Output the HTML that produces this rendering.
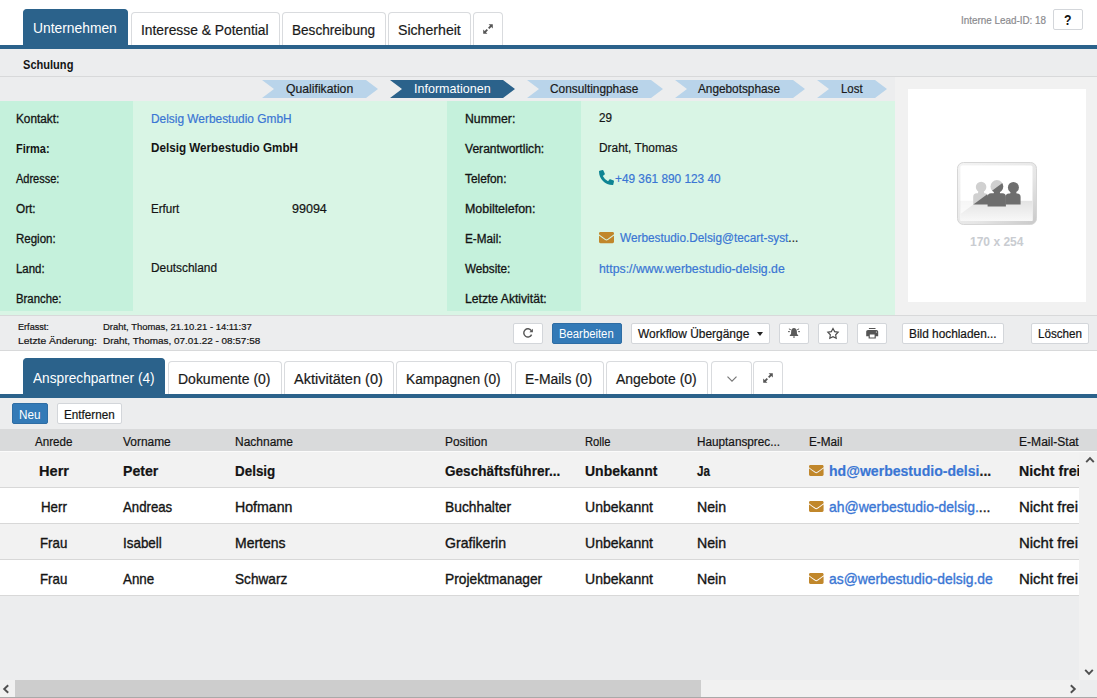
<!DOCTYPE html>
<html lang="de">
<head>
<meta charset="utf-8">
<title>Lead – Schulung</title>
<style>
*{box-sizing:border-box;margin:0;padding:0}
html,body{width:1097px;height:698px;overflow:hidden;background:#ecedee;font-family:"Liberation Sans",sans-serif;color:#141414}
.abs{position:absolute}
.t{position:absolute;white-space:nowrap;line-height:1;transform-origin:0 0;-webkit-text-stroke:0.2px}
#top{position:absolute;left:0;top:0;width:1097px;height:45px;background:#fff}
.line{position:absolute;left:0;width:1097px;height:4px;background:#2b628b}
.tab{position:absolute;background:#fff;border:1px solid #d9dbde;border-bottom:none;border-radius:4px 4px 0 0}
.tab.act{background:#2b628b;border-color:#2b628b}
#grey1{position:absolute;left:0;top:49px;width:1097px;height:27px;background:#ecedee}
.hl{position:absolute;left:0;height:1px;background:#d8d9da}
.chev{position:absolute;top:80px;height:18px;background:#b9d4ea;
 clip-path:polygon(0 0,calc(100% - 12px) 0,100% 50%,calc(100% - 12px) 100%,0 100%,12px 50%)}
.chev.on{background:#2b628b}
#green{position:absolute;left:0;top:101px;width:895px;height:214px;background:#d9f5e5}
.lab{position:absolute;top:0;height:210px;background:#c5f1dc}
.lk{color:#3a76d4}
.dk{color:#222}
#right{position:absolute;left:895px;top:77px;width:202px;height:238px;background:#f1f1f1}
#imgbox{position:absolute;left:908px;top:89px;width:178px;height:213px;background:#fff}
#foot{position:absolute;left:0;top:316px;width:1097px;height:34px;background:#ecedee}
.btn{position:absolute;top:323px;height:21px;background:#fff;border:1px solid #d3d6da;border-radius:2px}
.btn.pri{background:#337ab7;border-color:#2e6da4}
#tabs2{position:absolute;left:0;top:351px;width:1097px;height:43px;background:#fff}
#tool{position:absolute;left:0;top:398px;width:1097px;height:31px;background:#ecedee}
#thead{position:absolute;left:0;top:429px;width:1097px;height:22px;background:#d9dadb}
.row{position:absolute;left:0;width:1079px;height:36px;border-bottom:1px solid #d8d8d8}
.row.g{background:#f2f2f2}
.row.w{background:#fff}
svg{position:absolute;overflow:visible}
</style>
</head>
<body>
<div id="top"></div>
<div class="line" style="top:45px"></div>
<div class="tab act" style="left:23px;top:9px;width:105px;height:36px"></div>
<div class="t m " style="left:33.1px;top:21.45px;font-size:14px;color:#fff;-webkit-text-stroke:0;transform:scaleX(0.9879)">Unternehmen</div>
<div class="tab " style="left:131px;top:12px;width:149px;height:33px"></div>
<div class="t m " style="left:141.1px;top:22.65px;font-size:14px;color:#1a1a1a;transform:scaleX(0.9877)">Interesse &amp; Potential</div>
<div class="tab " style="left:282px;top:12px;width:104px;height:33px"></div>
<div class="t m " style="left:291.8px;top:22.65px;font-size:14px;color:#1a1a1a;transform:scaleX(0.9705)">Beschreibung</div>
<div class="tab " style="left:388px;top:12px;width:83px;height:33px"></div>
<div class="t m " style="left:397.5px;top:22.65px;font-size:14px;color:#1a1a1a;transform:scaleX(1.0086)">Sicherheit</div>
<div class="tab " style="left:473px;top:12px;width:30px;height:33px"></div>
<svg style="left:483px;top:24px" width="10" height="10" viewBox="0 0 10 10"><g stroke="#555" stroke-width="1.900"><line x1="5.700" y1="4.300" x2="8.300" y2="1.700"/><line x1="1.700" y1="8.300" x2="4.300" y2="5.700"/></g><path fill="#555" d="M5.600 0.200H9.800V4.400ZM0.200 5.600V9.800H4.400Z"/></svg>
<div class="t m " style="left:960.97px;top:14.63px;font-size:10.6px;color:#8a8a8e;transform:scaleX(0.9321)">Interne Lead-ID: 18</div>
<div class="abs" style="left:1053px;top:9px;width:30px;height:21px;border:1px solid #d3d6da;border-radius:2px;background:#fff"></div>
<div class="t m " style="left:1063.8px;top:12.75px;font-size:14px;font-weight:bold;-webkit-text-stroke:0;transform:scaleX(0.8759)">?</div>
<div id="grey1"></div>
<div class="t m " style="left:23.48px;top:59.02px;font-size:12.5px;font-weight:bold;-webkit-text-stroke:0;transform:scaleX(0.8849)">Schulung</div>
<div class="hl" style="top:76px;width:1097px"></div>
<div class="chev " style="left:262px;width:116px"></div>
<div class="t m " style="left:285.68px;top:83.4px;font-size:12.4px;color:#1a1a1a;transform:scaleX(0.9855)">Qualifikation</div>
<div class="chev on" style="left:390px;width:125px"></div>
<div class="t m " style="left:413.98px;top:83.4px;font-size:12.4px;color:#fff;-webkit-text-stroke:0;transform:scaleX(1.0110)">Informationen</div>
<div class="chev " style="left:527px;width:136px"></div>
<div class="t m " style="left:550.38px;top:83.4px;font-size:12.4px;color:#1a1a1a;transform:scaleX(0.9565)">Consultingphase</div>
<div class="chev " style="left:675px;width:130px"></div>
<div class="t m " style="left:698.38px;top:83.4px;font-size:12.4px;color:#1a1a1a;transform:scaleX(0.9521)">Angebotsphase</div>
<div class="chev " style="left:817px;width:70px"></div>
<div class="t m " style="left:840.88px;top:83.4px;font-size:12.4px;color:#1a1a1a;transform:scaleX(0.9222)">Lost</div>
<div id="green"><div class="lab" style="left:0;width:133px"></div><div class="lab" style="left:447px;width:134px"></div></div>
<div class="t m " style="left:15.9px;top:112.84px;font-size:12px;-webkit-text-stroke:0.3px;transform:scaleX(0.9834)">Kontakt:</div>
<div class="t m " style="left:15.9px;top:142.84px;font-size:12px;font-weight:bold;-webkit-text-stroke:0;transform:scaleX(0.9158)">Firma:</div>
<div class="t m " style="left:15.9px;top:172.84px;font-size:12px;-webkit-text-stroke:0.3px;transform:scaleX(0.9164)">Adresse:</div>
<div class="t m " style="left:15.9px;top:202.84px;font-size:12px;-webkit-text-stroke:0.3px;transform:scaleX(0.9800)">Ort:</div>
<div class="t m " style="left:15.9px;top:232.84px;font-size:12px;-webkit-text-stroke:0.3px;transform:scaleX(0.9595)">Region:</div>
<div class="t m " style="left:15.9px;top:262.84px;font-size:12px;-webkit-text-stroke:0.3px;transform:scaleX(0.9523)">Land:</div>
<div class="t m " style="left:15.9px;top:292.84px;font-size:12px;-webkit-text-stroke:0.3px;transform:scaleX(0.9452)">Branche:</div>
<div class="t m " style="left:464.9px;top:112.84px;font-size:12px;-webkit-text-stroke:0.3px;transform:scaleX(1.0194)">Nummer:</div>
<div class="t m " style="left:464.9px;top:142.84px;font-size:12px;-webkit-text-stroke:0.3px;transform:scaleX(1.0063)">Verantwortlich:</div>
<div class="t m " style="left:464.9px;top:172.84px;font-size:12px;-webkit-text-stroke:0.3px;transform:scaleX(0.9874)">Telefon:</div>
<div class="t m " style="left:464.9px;top:202.84px;font-size:12px;-webkit-text-stroke:0.3px;transform:scaleX(1.0346)">Mobiltelefon:</div>
<div class="t m " style="left:464.9px;top:232.84px;font-size:12px;-webkit-text-stroke:0.3px;transform:scaleX(0.9774)">E-Mail:</div>
<div class="t m " style="left:464.9px;top:262.84px;font-size:12px;-webkit-text-stroke:0.3px;transform:scaleX(0.9748)">Website:</div>
<div class="t m " style="left:464.9px;top:292.84px;font-size:12px;-webkit-text-stroke:0.3px;transform:scaleX(1.0122)">Letzte Aktivität:</div>
<div class="t m " style="left:150.8px;top:112.84px;font-size:12px;color:#3a76d4;transform:scaleX(0.9912)">Delsig Werbestudio GmbH</div>
<div class="t m " style="left:150.8px;top:141.84px;font-size:12px;font-weight:bold;-webkit-text-stroke:0;transform:scaleX(0.9726)">Delsig Werbestudio GmbH</div>
<div class="t m " style="left:150.8px;top:202.84px;font-size:12px;transform:scaleX(0.9644)">Erfurt</div>
<div class="t m " style="left:291.6px;top:202.84px;font-size:12px;transform:scaleX(1.0427)">99094</div>
<div class="t m " style="left:150.8px;top:261.64px;font-size:12px;transform:scaleX(0.9892)">Deutschland</div>
<div class="t m " style="left:599.4px;top:111.84px;font-size:12px;transform:scaleX(0.9731)">29</div>
<div class="t m " style="left:598.6px;top:141.54px;font-size:12px;transform:scaleX(0.9904)">Draht, Thomas</div>
<svg style="left:599px;top:170px" width="15" height="15" viewBox="0 0 512 512"><path fill="#0e8493" d="M497.39 361.8l-112-48a24 24 0 0 0-28 6.9l-49.600 60.600A370.660 370.660 0 0 1 130.600 204.110l60.600-49.600a23.940 23.940 0 0 0 6.900-28l-48-112A24.160 24.160 0 0 0 122.600.610l-104 24A24 24 0 0 0 0 48c0 256.500 207.900 464 464 464a24 24 0 0 0 23.400-18.600l24-104a24.290 24.290 0 0 0-14.010-27.600z"/></svg>
<div class="t m " style="left:614.7px;top:173.04px;font-size:12px;color:#3a76d4;transform:scaleX(0.9859)">+49 361 890 123 40</div>
<svg style="left:599px;top:232px" width="15" height="11.25" viewBox="0 64 512 384"><path fill="#c1872b" d="M502.300 190.800c3.900-3.100 9.700-.2 9.700 4.700V400c0 26.500-21.500 48-48 48H48c-26.500 0-48-21.500-48-48V195.600c0-5 5.700-7.800 9.700-4.700 22.400 17.400 52.100 39.500 154.100 113.600 21.100 15.400 56.700 47.800 92.200 47.600 35.700.3 72-32.800 92.300-47.600 102-74.100 131.600-96.300 154-113.700zM256 320c23.200.4 56.600-29.200 73.400-41.400 132.700-96.300 142.800-104.700 173.400-128.700 5.800-4.500 9.200-11.500 9.200-18.900V112c0-26.500-21.500-48-48-48H48C21.500 64 0 85.500 0 112v19c0 7.400 3.400 14.300 9.200 18.900 30.600 23.900 40.700 32.400 173.400 128.700 16.800 12.200 50.200 41.800 73.400 41.400z"/></svg>
<div class="t m " style="left:619.7px;top:232.34px;font-size:12px;color:#3a76d4;transform:scaleX(0.9825)">Werbestudio.Delsig@tecart-syst<span class="dk">...</span></div>
<div class="t m " style="left:598.8px;top:263.14px;font-size:12px;color:#3a76d4;transform:scaleX(1.0240)">https://www.werbestudio-delsig.de</div>
<div id="right"></div><div id="imgbox"></div>
<svg style="left:957px;top:162px" width="80" height="63" viewBox="0 0 80 63"><defs><linearGradient id="gf" x1="0" y1="0" x2="0" y2="1"><stop offset="0" stop-color="#e3e3e3"/><stop offset="1" stop-color="#f8f8f8"/></linearGradient><linearGradient id="gb" x1="0" y1="0" x2="1" y2="1"><stop offset="0" stop-color="#f4f4f4"/><stop offset="0.6" stop-color="#e6e6e6"/><stop offset="1" stop-color="#c9c9c9"/></linearGradient><clipPath id="gc"><rect x="3.500" y="3.500" width="72" height="55.500" rx="1.500"/></clipPath></defs><rect x="0.500" y="0.500" width="79" height="62" rx="6" fill="url(#gb)" stroke="#d6d6d6" stroke-width="1"/><rect x="3.500" y="3.500" width="72" height="55.500" rx="1.500" fill="#fff"/><rect x="3.500" y="38.800" width="72" height="20.200" fill="url(#gf)"/><g fill="#6e6e6e"><circle cx="24.100" cy="25" r="5.300"/><path d="M16.2 42.6V34.7Q16.2 31.2 19.7 31.2L20.900000000000002 31.2L21.5 28.7H26.700000000000003L27.3 31.2H27.5Q31 31.2 31 34.7V42.6Z"/><circle cx="56.400" cy="25.400" r="5.500"/><path d="M48.5 42.6V35.0Q48.5 31.5 52.0 31.5L53.199999999999996 31.5L53.8 29.0H59.0L59.6 31.5H60.1Q63.6 31.5 63.6 35.0V42.6Z"/><circle cx="39.900" cy="24.500" r="6.400"/><path d="M30.6 44.5V34.7Q30.6 31.2 34.1 31.2L36.699999999999996 31.2L37.3 28.7H42.5L43.1 31.2H45.4Q48.9 31.2 48.9 34.7V44.5Z"/></g><path clip-path="url(#gc)" d="M3.500 3.500H69.200L3.500 52.100Z" fill="#fff" fill-opacity="0.68"/></svg>
<div class="t m " style="left:970.4px;top:235.54px;font-size:12px;color:#c9ccd1;font-weight:bold;-webkit-text-stroke:0;transform:scaleX(1.0020)">170 x 254</div>
<div class="hl" style="top:315px;width:1097px"></div>
<div id="foot"></div>
<div class="t m " style="left:17.82px;top:321.59px;font-size:9.7px;transform:scaleX(0.9408)">Erfasst:</div>
<div class="t m " style="left:17.82px;top:335.79px;font-size:9.7px;transform:scaleX(1.0678)">Letzte Änderung:</div>
<div class="t m " style="left:102.92px;top:321.59px;font-size:9.7px;transform:scaleX(0.9745)">Draht, Thomas, 21.10.21 - 14:11:37</div>
<div class="t m " style="left:102.92px;top:335.79px;font-size:9.7px;transform:scaleX(1.0254)">Draht, Thomas, 07.01.22 - 08:57:58</div>
<div class="btn " style="left:513px;width:30px"></div>
<div class="btn pri" style="left:552px;width:70px"></div>
<div class="btn " style="left:631px;width:139px"></div>
<div class="btn " style="left:779px;width:30px"></div>
<div class="btn " style="left:818px;width:30px"></div>
<div class="btn " style="left:857px;width:30px"></div>
<div class="btn " style="left:902px;width:102px"></div>
<div class="btn " style="left:1031px;width:58px"></div>
<svg style="left:523px;top:328px" width="10" height="10" viewBox="0 0 10 10"><path fill="none" stroke="#555" stroke-width="1.4" d="M8.6 6.6A4.1 4.1 0 1 1 8.3 2.6"/><path fill="#555" d="M9.9 0.8V4.3H6.4Z"/></svg>
<svg style="left:782px;top:322px" width="24" height="24" viewBox="0 0 24 24"><path fill="#5a5a5a" d="M12 6.100C10.300 6.100 9.300 7.500 9.200 9L9 12.100L7.800 13.300V14H16.200V13.300L15 12.100L14.800 9C14.700 7.500 13.700 6.100 12 6.100ZM10.900 14.600H13.100A1.100 1.200 0 0 1 10.900 14.600Z"/><g stroke="#5a5a5a" stroke-width="1"><line x1="6.900" y1="6.900" x2="8.800" y2="7.700"/><line x1="6" y1="9.650" x2="7.900" y2="9.650"/><line x1="15.200" y1="7.700" x2="17.100" y2="6.900"/><line x1="16.100" y1="9.650" x2="18" y2="9.650"/></g></svg>
<svg style="left:821px;top:322px" width="24" height="24" viewBox="0 0 24 24"><path fill="none" stroke="#4a4a4a" stroke-width="1.150" stroke-linejoin="miter" d="M12.00 6.45L13.65 9.63L17.18 10.22L14.66 12.77L15.20 16.31L12.00 14.70L8.80 16.31L9.34 12.77L6.82 10.22L10.35 9.63Z"/></svg>
<svg style="left:864.8px;top:325.8px" width="14.400" height="14.400" viewBox="0 0 24 24"><path fill="#555" d="M19 6.500H5c-1.660 0-3 1.340-3 3V17h4v4h12v-4h4V9.500c0-1.660-1.340-3-3-3zm-3 12.500H8v-5h8v5zm3-8c-.550 0-1-.450-1-1s.450-1 1-1 1 .450 1 1-.450 1-1 1zM17.500 3.400h-11v1.800h11z"/></svg>
<div class="t m " style="left:559.0px;top:327.84px;font-size:12px;color:#fff;-webkit-text-stroke:0;transform:scaleX(0.9423)">Bearbeiten</div>
<div class="t m " style="left:638.4px;top:327.84px;font-size:12px;transform:scaleX(0.9951)">Workflow Übergänge</div>
<div class="t m " style="left:908.6px;top:327.84px;font-size:12px;transform:scaleX(0.9872)">Bild hochladen...</div>
<div class="t m " style="left:1037.5px;top:327.84px;font-size:12px;transform:scaleX(0.9697)">Löschen</div>
<div class="abs" style="left:756.5px;top:332px;width:0;height:0;border-left:3.5px solid transparent;border-right:3.5px solid transparent;border-top:4px solid #222"></div>
<div class="hl" style="top:350px;width:1097px"></div>
<div id="tabs2"></div>
<div class="line" style="top:394px"></div>
<div class="tab act" style="left:23px;top:358px;width:142px;height:36px"></div>
<div class="t m " style="left:32.7px;top:370.55px;font-size:14px;color:#fff;-webkit-text-stroke:0;transform:scaleX(0.9766)">Ansprechpartner (4)</div>
<div class="tab " style="left:168px;top:361px;width:114px;height:33px"></div>
<div class="t m " style="left:178.0px;top:371.65px;font-size:14px;color:#1a1a1a;transform:scaleX(0.9990)">Dokumente (0)</div>
<div class="tab " style="left:284px;top:361px;width:110px;height:33px"></div>
<div class="t m " style="left:293.8px;top:371.65px;font-size:14px;color:#1a1a1a;transform:scaleX(1.0375)">Aktivitäten (0)</div>
<div class="tab " style="left:396px;top:361px;width:116px;height:33px"></div>
<div class="t m " style="left:405.9px;top:371.65px;font-size:14px;color:#1a1a1a;transform:scaleX(0.9802)">Kampagnen (0)</div>
<div class="tab " style="left:515px;top:361px;width:89px;height:33px"></div>
<div class="t m " style="left:524.9px;top:371.65px;font-size:14px;color:#1a1a1a;transform:scaleX(0.9930)">E-Mails (0)</div>
<div class="tab " style="left:606px;top:361px;width:102px;height:33px"></div>
<div class="t m " style="left:616.1px;top:371.65px;font-size:14px;color:#1a1a1a;transform:scaleX(0.9969)">Angebote (0)</div>
<div class="tab " style="left:711px;top:361px;width:41px;height:33px"></div>
<div class="tab " style="left:753px;top:361px;width:30px;height:33px"></div>
<svg style="left:726.5px;top:376px" width="10" height="6.0" viewBox="0 0 10 6"><path fill="none" stroke="#777" stroke-width="1.200" d="M0.500 0.700L5 5.200L9.500 0.700"/></svg>
<svg style="left:763px;top:373px" width="10" height="10" viewBox="0 0 10 10"><g stroke="#555" stroke-width="1.900"><line x1="5.700" y1="4.300" x2="8.300" y2="1.700"/><line x1="1.700" y1="8.300" x2="4.300" y2="5.700"/></g><path fill="#555" d="M5.600 0.200H9.800V4.400ZM0.200 5.600V9.800H4.400Z"/></svg>
<div id="tool"></div>
<div class="btn pri" style="left:12px;top:403px;width:36px"></div>
<div class="btn" style="left:57px;top:403px;width:65px"></div>
<div class="t m " style="left:18.9px;top:408.64px;font-size:12px;color:#fff;-webkit-text-stroke:0;transform:scaleX(0.9766)">Neu</div>
<div class="t m " style="left:63.6px;top:408.64px;font-size:12px;transform:scaleX(0.9741)">Entfernen</div>
<div id="thead"></div>
<div class="abs" style="left:0;top:451px;width:1097px;height:1px;background:#fbfbfb"></div>
<div class="t m " style="left:34.78px;top:435.59px;font-size:12.3px;transform:scaleX(0.9431)">Anrede</div>
<div class="t m " style="left:122.79px;top:435.59px;font-size:12.3px;transform:scaleX(0.9691)">Vorname</div>
<div class="t m " style="left:234.78px;top:435.59px;font-size:12.3px;transform:scaleX(0.9753)">Nachname</div>
<div class="t m " style="left:444.99px;top:435.59px;font-size:12.3px;transform:scaleX(0.9669)">Position</div>
<div class="t m " style="left:584.59px;top:435.59px;font-size:12.3px;transform:scaleX(0.9133)">Rolle</div>
<div class="t m " style="left:696.78px;top:435.59px;font-size:12.3px;transform:scaleX(0.9561)">Hauptansprec...</div>
<div class="t m " style="left:808.68px;top:435.59px;font-size:12.3px;transform:scaleX(0.9557)">E-Mail</div>
<div class="t m " style="left:1018.68px;top:435.59px;font-size:12.3px;transform:scaleX(0.9817)">E-Mail-Stat</div>
<div class="row g" style="top:452px"></div>
<div class="t m " style="left:38.98px;top:464.2px;font-size:14.3px;font-weight:bold;-webkit-text-stroke:0.2px;transform:scaleX(1.0202)">Herr</div>
<div class="t m " style="left:122.78px;top:464.2px;font-size:14.3px;font-weight:bold;-webkit-text-stroke:0.2px;transform:scaleX(0.9870)">Peter</div>
<div class="t m " style="left:234.59px;top:464.2px;font-size:14.3px;font-weight:bold;-webkit-text-stroke:0.2px;transform:scaleX(0.9393)">Delsig</div>
<div class="t m " style="left:444.89px;top:464.2px;font-size:14.3px;font-weight:bold;-webkit-text-stroke:0.2px;transform:scaleX(0.9484)">Geschäftsführer...</div>
<div class="t m " style="left:584.58px;top:464.2px;font-size:14.3px;font-weight:bold;-webkit-text-stroke:0.2px;transform:scaleX(0.9800)">Unbekannt</div>
<div class="t m " style="left:696.78px;top:464.2px;font-size:14.3px;font-weight:bold;-webkit-text-stroke:0.2px;transform:scaleX(0.8173)">Ja</div>
<svg style="left:809.3px;top:465px" width="14.6" height="10.95" viewBox="0 64 512 384"><path fill="#c1872b" d="M502.300 190.800c3.900-3.100 9.700-.2 9.700 4.700V400c0 26.500-21.500 48-48 48H48c-26.500 0-48-21.500-48-48V195.600c0-5 5.700-7.800 9.700-4.700 22.400 17.400 52.100 39.500 154.100 113.600 21.100 15.400 56.700 47.800 92.200 47.600 35.700.3 72-32.800 92.300-47.600 102-74.100 131.600-96.300 154-113.700zM256 320c23.200.4 56.600-29.200 73.400-41.400 132.700-96.300 142.800-104.700 173.400-128.700 5.800-4.500 9.200-11.500 9.200-18.900V112c0-26.500-21.500-48-48-48H48C21.500 64 0 85.500 0 112v19c0 7.400 3.400 14.300 9.200 18.900 30.600 23.900 40.700 32.400 173.400 128.700 16.800 12.200 50.200 41.800 73.400 41.400z"/></svg>
<div class="t m " style="left:829.49px;top:464.2px;font-size:14.3px;color:#3a76d4;font-weight:bold;-webkit-text-stroke:0.2px;transform:scaleX(0.9838)">hd@werbestudio-delsi<span class="dk">...</span></div>
<div class="t m " style="left:1018.88px;top:464.2px;font-size:14.3px;font-weight:bold;-webkit-text-stroke:0.2px;transform:scaleX(0.9924)">Nicht frei</div>
<div class="row w" style="top:488px"></div>
<div class="t m " style="left:41.18px;top:500.2px;font-size:14.3px;-webkit-text-stroke:0.35px;transform:scaleX(0.9312)">Herr</div>
<div class="t m " style="left:122.78px;top:500.2px;font-size:14.3px;-webkit-text-stroke:0.35px;transform:scaleX(0.9237)">Andreas</div>
<div class="t m " style="left:234.59px;top:500.2px;font-size:14.3px;-webkit-text-stroke:0.35px;transform:scaleX(0.9911)">Hofmann</div>
<div class="t m " style="left:444.89px;top:500.2px;font-size:14.3px;-webkit-text-stroke:0.35px;transform:scaleX(0.9655)">Buchhalter</div>
<div class="t m " style="left:584.58px;top:500.2px;font-size:14.3px;-webkit-text-stroke:0.35px;transform:scaleX(0.9818)">Unbekannt</div>
<div class="t m " style="left:696.78px;top:500.2px;font-size:14.3px;-webkit-text-stroke:0.35px;transform:scaleX(0.9896)">Nein</div>
<svg style="left:809.3px;top:501px" width="14.6" height="10.95" viewBox="0 64 512 384"><path fill="#c1872b" d="M502.300 190.800c3.900-3.100 9.700-.2 9.700 4.700V400c0 26.500-21.500 48-48 48H48c-26.500 0-48-21.500-48-48V195.600c0-5 5.700-7.800 9.700-4.700 22.400 17.400 52.100 39.500 154.100 113.600 21.100 15.400 56.700 47.800 92.200 47.600 35.700.3 72-32.800 92.300-47.600 102-74.100 131.600-96.300 154-113.700zM256 320c23.200.4 56.600-29.200 73.400-41.400 132.700-96.300 142.800-104.700 173.400-128.700 5.800-4.500 9.200-11.500 9.200-18.900V112c0-26.500-21.500-48-48-48H48C21.500 64 0 85.500 0 112v19c0 7.400 3.400 14.300 9.200 18.900 30.600 23.900 40.700 32.400 173.400 128.700 16.800 12.200 50.200 41.800 73.400 41.400z"/></svg>
<div class="t m " style="left:829.49px;top:500.2px;font-size:14.3px;color:#3a76d4;-webkit-text-stroke:0.35px;transform:scaleX(0.9756)">ah@werbestudio-delsig.<span class="dk">...</span></div>
<div class="t m " style="left:1018.88px;top:500.2px;font-size:14.3px;-webkit-text-stroke:0.35px;transform:scaleX(1.0460)">Nicht frei</div>
<div class="row g" style="top:524px"></div>
<div class="t m " style="left:40.48px;top:536.2px;font-size:14.3px;-webkit-text-stroke:0.35px;transform:scaleX(0.9284)">Frau</div>
<div class="t m " style="left:122.78px;top:536.2px;font-size:14.3px;-webkit-text-stroke:0.35px;transform:scaleX(0.9388)">Isabell</div>
<div class="t m " style="left:234.59px;top:536.2px;font-size:14.3px;-webkit-text-stroke:0.35px;transform:scaleX(0.9796)">Mertens</div>
<div class="t m " style="left:444.89px;top:536.2px;font-size:14.3px;-webkit-text-stroke:0.35px;transform:scaleX(0.9857)">Grafikerin</div>
<div class="t m " style="left:584.58px;top:536.2px;font-size:14.3px;-webkit-text-stroke:0.35px;transform:scaleX(0.9818)">Unbekannt</div>
<div class="t m " style="left:696.78px;top:536.2px;font-size:14.3px;-webkit-text-stroke:0.35px;transform:scaleX(0.9896)">Nein</div>
<div class="t m " style="left:1018.88px;top:536.2px;font-size:14.3px;-webkit-text-stroke:0.35px;transform:scaleX(1.0460)">Nicht frei</div>
<div class="row w" style="top:560px"></div>
<div class="t m " style="left:40.48px;top:572.2px;font-size:14.3px;-webkit-text-stroke:0.35px;transform:scaleX(0.9284)">Frau</div>
<div class="t m " style="left:122.78px;top:572.2px;font-size:14.3px;-webkit-text-stroke:0.35px;transform:scaleX(0.9344)">Anne</div>
<div class="t m " style="left:234.59px;top:572.2px;font-size:14.3px;-webkit-text-stroke:0.35px;transform:scaleX(0.9539)">Schwarz</div>
<div class="t m " style="left:444.89px;top:572.2px;font-size:14.3px;-webkit-text-stroke:0.35px;transform:scaleX(0.9630)">Projektmanager</div>
<div class="t m " style="left:584.58px;top:572.2px;font-size:14.3px;-webkit-text-stroke:0.35px;transform:scaleX(0.9818)">Unbekannt</div>
<div class="t m " style="left:696.78px;top:572.2px;font-size:14.3px;-webkit-text-stroke:0.35px;transform:scaleX(0.9896)">Nein</div>
<svg style="left:809.3px;top:573px" width="14.6" height="10.95" viewBox="0 64 512 384"><path fill="#c1872b" d="M502.300 190.800c3.900-3.100 9.700-.2 9.700 4.700V400c0 26.500-21.500 48-48 48H48c-26.500 0-48-21.500-48-48V195.600c0-5 5.700-7.800 9.700-4.700 22.400 17.400 52.100 39.500 154.100 113.600 21.100 15.400 56.700 47.800 92.200 47.600 35.700.3 72-32.800 92.300-47.600 102-74.100 131.600-96.300 154-113.700zM256 320c23.200.4 56.600-29.200 73.400-41.400 132.700-96.300 142.800-104.700 173.400-128.700 5.800-4.500 9.200-11.500 9.200-18.900V112c0-26.500-21.500-48-48-48H48C21.500 64 0 85.500 0 112v19c0 7.400 3.400 14.300 9.200 18.900 30.600 23.900 40.700 32.400 173.400 128.700 16.800 12.200 50.200 41.800 73.400 41.400z"/></svg>
<div class="t m " style="left:829.49px;top:572.2px;font-size:14.3px;color:#3a76d4;-webkit-text-stroke:0.35px;transform:scaleX(0.9709)">as@werbestudio-delsig.de</div>
<div class="t m " style="left:1018.88px;top:572.2px;font-size:14.3px;-webkit-text-stroke:0.35px;transform:scaleX(1.0460)">Nicht frei</div>
<div class="abs" style="left:1079px;top:452px;width:18px;height:228px;background:#f1f1f1"></div>
<div class="abs" style="left:0;top:680px;width:1080px;height:17px;background:#f1f1f1"></div>
<div class="abs" style="left:15px;top:680px;width:686px;height:17px;background:#cdcdcd"></div>
<div class="abs" style="left:0;top:697px;width:1097px;height:1px;background:#a9a9a9"></div>
<svg style="left:1083.5px;top:454px" width="12" height="12" viewBox="-6 -6 12 12"><path transform="rotate(0)" fill="none" stroke="#505050" stroke-width="1.900" d="M-3.800 2.200L0 -1.800L3.800 2.200"/></svg>
<svg style="left:1083.4px;top:666.1px" width="12" height="12" viewBox="-6 -6 12 12"><path transform="rotate(180)" fill="none" stroke="#505050" stroke-width="1.900" d="M-3.800 2.200L0 -1.800L3.800 2.200"/></svg>
<svg style="left:0px;top:682.5px" width="12" height="12" viewBox="-6 -6 12 12"><path transform="rotate(270)" fill="none" stroke="#505050" stroke-width="1.900" d="M-3.800 2.200L0 -1.800L3.800 2.200"/></svg>
<svg style="left:1067px;top:682.5px" width="12" height="12" viewBox="-6 -6 12 12"><path transform="rotate(90)" fill="none" stroke="#505050" stroke-width="1.900" d="M-3.800 2.200L0 -1.800L3.800 2.200"/></svg>
</body>
</html>
